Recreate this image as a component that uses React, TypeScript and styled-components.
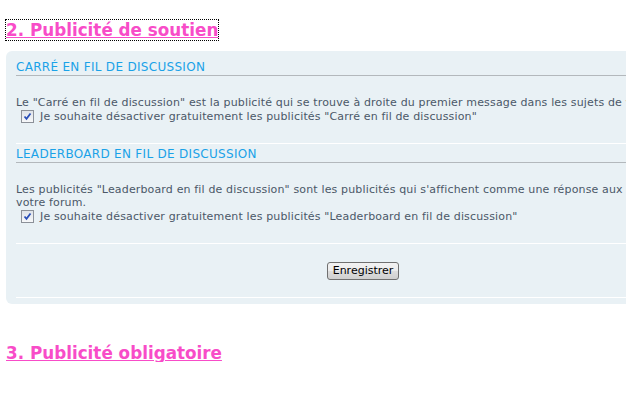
import React from "react";
import styled, { createGlobalStyle } from "styled-components";

const Global = createGlobalStyle`
  html, body { margin: 0; padding: 0; overflow: hidden; background: #ffffff; }
  body { font-family: "DejaVu Sans", Verdana, sans-serif; }
`;

const Page = styled.div`
  padding: 21px 0 0 6px;
  width: 760px;
`;

const SectionHeading = styled.h2<{ $gap?: number }>`
  margin: ${(p) => p.$gap ?? 0}px 0 0 0;
  font-size: 16.8px;
  line-height: 18px;
  font-weight: bold;
`;

const HeadingLink = styled.a<{ $focused?: boolean }>`
  color: #f84cc8;
  text-decoration: underline;
  outline: ${(p) => (p.$focused ? "1px dotted #000" : "none")};
  outline-offset: 0;
  cursor: pointer;
`;

const Panel = styled.div`
  margin-top: 12px;
  width: 704px;
  background: #e9f1f5;
  border-radius: 6px;
  padding: 6px 0 6px 10px;
  box-sizing: border-box;
`;

const Block = styled.div`
  border-bottom: 1px solid #ffffff;
`;

const BlockTitle = styled.h3`
  margin: 3px 0 0 0;
  font-size: 12px;
  letter-spacing: 0.3px;
  font-weight: normal;
  color: #1aa2e8;
  line-height: 15px;
  border-bottom: 1px solid #b3b8bc;
`;

const BlockBody = styled.div`
  padding: 20px 0 20px 0;
  font-size: 11px;
  letter-spacing: 0.15px;
  line-height: 13px;
  color: #4b5868;
`;

const Paragraph = styled.div<{ $single?: boolean }>`
  white-space: ${(p) => (p.$single ? "nowrap" : "normal")};
`;

const CheckRow = styled.label`
  display: flex;
  align-items: center;
  gap: 6px;
  height: 13px;
  margin: 1px 0 0 5px;
  white-space: nowrap;
`;

const FakeCheck = styled.span`
  width: 11px;
  height: 11px;
  border: 1px solid #8c9199;
  background: linear-gradient(#dfe3e8, #f7f8fa);
  display: inline-flex;
  align-items: center;
  justify-content: center;
  flex: none;
`;

const Actions = styled.div`
  display: flex;
  justify-content: center;
  padding: 18px 0 17px 0;
  border-bottom: 1px solid #ffffff;
`;

const SaveButton = styled.button`
  font-family: Tahoma, "DejaVu Sans", sans-serif;
  font-size: 11px;
  color: #000;
  height: 18px;
  padding: 0 5px;
  border: 1px solid #707070;
  border-radius: 3px;
  background: linear-gradient(#f2f2f2 0%, #ebebeb 50%, #dddddd 51%, #cfcfcf 100%);
  line-height: 14px;
`;

const Check = () => (
  <FakeCheck>
    <svg width="9" height="9" viewBox="0 0 9 9">
      <path d="M1.5 4.5 L3.5 6.8 L7.5 1.5" fill="none" stroke="#2a4fb8" strokeWidth="1.8" />
    </svg>
  </FakeCheck>
);

export default function App() {
  return (
    <>
      <Global />
      <Page>
        <SectionHeading>
          <HeadingLink $focused>2. Publicité de soutien</HeadingLink>
        </SectionHeading>
        <Panel>
          <Block>
            <BlockTitle>CARRÉ EN FIL DE DISCUSSION</BlockTitle>
            <BlockBody>
              <Paragraph $single>
                Le "Carré en fil de discussion" est la publicité qui se trouve à droite du premier message dans les sujets de votre forum.
              </Paragraph>
              <CheckRow>
                <Check />
                Je souhaite désactiver gratuitement les publicités "Carré en fil de discussion"
              </CheckRow>
            </BlockBody>
          </Block>
          <Block>
            <BlockTitle>LEADERBOARD EN FIL DE DISCUSSION</BlockTitle>
            <BlockBody>
              <Paragraph>
                Les publicités "Leaderboard en fil de discussion" sont les publicités qui s'affichent comme une réponse aux sujets de votre forum.
              </Paragraph>
              <CheckRow>
                <Check />
                Je souhaite désactiver gratuitement les publicités "Leaderboard en fil de discussion"
              </CheckRow>
            </BlockBody>
          </Block>
          <Actions>
            <SaveButton>Enregistrer</SaveButton>
          </Actions>
        </Panel>
        <SectionHeading $gap={40}>
          <HeadingLink>3. Publicité obligatoire</HeadingLink>
        </SectionHeading>
      </Page>
    </>
  );
}
